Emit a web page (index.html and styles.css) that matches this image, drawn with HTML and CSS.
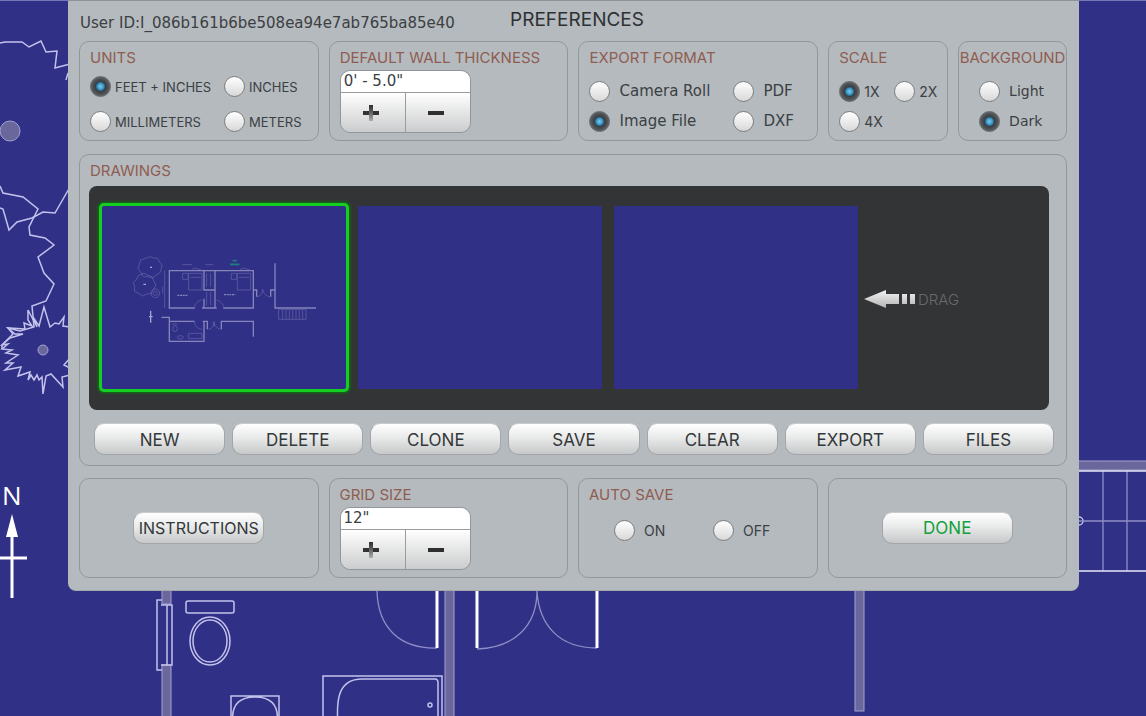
FILE: index.html
```html
<!DOCTYPE html>
<html lang="en">
<head>
    <meta charset="UTF-8">
    <meta name="viewport" content="width=device-width, initial-scale=1.0">
    <title>Preferences</title>
    <link rel="stylesheet" href="styles.css">
</head>
<body>
    <!-- Floor plan behind the panel -->
    <svg class="plan" aria-hidden="true">
        <path class="plan-thin" d="M0 0H2200"/>
        <g class="plan-tree">
            <path d="M0 43L5 42H22L29 47L41 41L46 52L57 51L55 68L70 64M68 73L66 80"/>
            <path d="M0 186L3 193L23 197L38 209L29 227L30 235L45 238L54 245L38 257L44 273L54 284L46 301L32 306L34 327L20 331L8 328L13 334L2 345V349"/>
            <path d="M0 208L3 209L9 230L17 222L32 218L43 212L55 213L70 187"/>
            <path d="M70 327L63 326L64 317L59 324L55 323L50 327L44 307L39 326L33 317L37 327L28 310V320L32 326L24 323L25 329L8 328L15 334L23 334L10 338L2 345L8 344L2 349L12 350L6 353L18 355L6 363L13 363L5 370L21 367L18 376L30 372L28 380L31 375L34 380L37 375L39 380L42 377L43 394L46 376L51 374L63 387L62 377L70 375M70 358L64 365L70 368"/>
        </g>
        <circle class="plan-solid" cx="10" cy="131" r="10"/>
        <circle class="plan-solid" cx="43" cy="350" r="5"/>

        <text class="plan-north" x="2" y="505">N</text>
        <path class="plan-white" d="M12 534V598M0 558H27"/>
        <path class="plan-head" d="M12 514L18 537H6Z"/>

        <g class="plan-solid">
            <rect x="162" y="580" width="9" height="24"/>
            <rect x="162" y="665" width="9" height="60"/>
            <rect x="445" y="580" width="9" height="145"/>
            <rect x="855" y="580" width="9" height="131"/>
            <rect x="1070" y="461" width="1200" height="9"/>
        </g>
        <g class="plan-line">
            <path d="M162 600H157V670H162M161 605H172V665H161M167 605V665"/>
            <rect x="186" y="601" width="48" height="12" rx="2"/>
            <ellipse cx="210" cy="641" rx="20" ry="24"/>
            <ellipse cx="210" cy="641" rx="17" ry="21"/>
            <path d="M231 725V696H279V725M233 725C230 702 242 697 255 697S280 702 277 725"/>
            <path d="M323 725V676H442V725M338 725C336 700 338 679 362 679H435Q438 679 438 683V725"/>
            <circle cx="430" cy="705" r="2"/>
            <circle cx="1079" cy="521" r="4"/>
        </g>
        <path class="plan-thin" d="M377 591C378 628 400 649 437 648M477 649C514 648 537 626 537 591C539 626 560 648 597 648M1103 471V571M1127 471V571M1079 521H2200"/>
        <path class="plan-white" d="M437 580V648M477 580V648M597 580V648"/>
        <path class="plan-edge" d="M1070 471H2200M1070 571H2200"/>
    </svg>

    <main class="panel">
        <header class="panel-header">
            <div class="user-id">User ID:I_086b161b6be508ea94e7ab765ba85e40</div>
            <h1>PREFERENCES</h1>
        </header>

        <div class="row row-top">
            <section class="box">
                <h2>UNITS</h2>
                <div class="options options-units">
                    <label><input type="radio" name="units" checked>FEET + INCHES</label>
                    <label><input type="radio" name="units">INCHES</label>
                    <label><input type="radio" name="units">MILLIMETERS</label>
                    <label><input type="radio" name="units">METERS</label>
                </div>
            </section>

            <section class="box">
                <h2><label for="wall">DEFAULT WALL THICKNESS</label></h2>
                <div class="stepper">
                    <input type="text" id="wall" value="0' - 5.0&quot;">
                    <button type="button" aria-label="Increase wall thickness">
                        <svg width="16" height="16">
                            <defs>
                                <linearGradient id="fade" x1="0" y1="0" x2="0" y2="1">
                                    <stop offset="0" stop-color="#2c2c2c"/>
                                    <stop offset="0.5" stop-color="#666"/>
                                    <stop offset="1" stop-color="#b0b0b0"/>
                                </linearGradient>
                            </defs>
                            <path fill="#333" d="M0 6H16V10H0Z"/>
                            <path fill="url(#fade)" d="M6 0H10V16H6Z"/>
                        </svg>
                    </button>
                    <button type="button" aria-label="Decrease wall thickness">
                        <svg width="16" height="16"><path fill="#2f2f2f" d="M0 6H16V10H0Z"/></svg>
                    </button>
                </div>
            </section>

            <section class="box">
                <h2>EXPORT FORMAT</h2>
                <div class="options options-export">
                    <label><input type="radio" name="format">Camera Roll</label>
                    <label><input type="radio" name="format">PDF</label>
                    <label><input type="radio" name="format" checked>Image File</label>
                    <label><input type="radio" name="format">DXF</label>
                </div>
            </section>

            <section class="box">
                <h2>SCALE</h2>
                <div class="options options-scale">
                    <label><input type="radio" name="scale" checked>1X</label>
                    <label><input type="radio" name="scale">2X</label>
                    <label><input type="radio" name="scale">4X</label>
                </div>
            </section>

            <section class="box box-background">
                <h2>BACKGROUND</h2>
                <div class="options options-background">
                    <label><input type="radio" name="background">Light</label>
                    <label><input type="radio" name="background" checked>Dark</label>
                </div>
            </section>
        </div>

        <section class="box drawings">
            <h2>DRAWINGS</h2>
            <div class="strip">
                <div class="thumb selected">
                    <svg viewBox="36 48 732 549" role="img" aria-label="Floor plan">
                        <g class="mini-walls">
                            <path d="M314 354H238V242H490V354H400M342 242V302M342 326V354M375 242V354M336 354H380M342 300H375"/>
                            <path d="M214 382H238V454H342V396M238 394H314M338 394H352V418M394 418V394H490V440"/>
                            <path d="M490 300H500V320M542 320V300H554M555 220V354H678"/>
                        </g>
                        <g class="mini-lines">
                            <path d="M180 200l12 4 10 0 6 12 8 8-2 12-4 12-12 8-10 8-14-4-14 0-8-14-8-10 4-14 4-12 12-4z"/>
                            <path d="M162 250l12 6 12 4 6 14 6 12-8 12-6 12-14 2-12 6-12-8-12-6 0-14-4-12 10-10 6-12z"/>
                            <circle cx="196" cy="310" r="13"/>
                            <circle cx="196" cy="310" r="6"/>
                            <path d="M224 242V354M218 290V310M296 250H336V300H296ZM278 250H294V268H278ZM300 262H332M442 250H482V300H442ZM424 250H440V268H424ZM446 262H478"/>
                            <path d="M304 240L312 234L334 240M450 240L460 234L480 240M350 250V290M362 250V290M350 306V346M362 306V346"/>
                            <path d="M314 354C314 340 324 332 336 330M402 354C400 340 390 332 380 330M314 396C314 408 322 416 336 418M372 394V410M356 418C366 416 372 408 372 396C374 408 382 416 392 418M500 320C510 320 518 312 518 298C520 312 530 320 542 320"/>
                            <path d="M566 358H648V388H566ZM578 358V388M588 358V388M598 358V388M608 358V388M618 358V388M628 358V388M638 358V388"/>
                            <path d="M246 402H262M296 430H336V446H296ZM276 224H306M346 224H370"/>
                            <ellipse cx="255" cy="416" rx="7" ry="9"/>
                            <ellipse cx="271" cy="442" rx="9" ry="5"/>
                        </g>
                        <path class="mini-marks" d="M182 362V398M177 380H188M180 232H186M160 283H168"/>
                        <path class="mini-walls" stroke-dasharray="6 2" d="M262 316H294M402 314H436"/>
                        <path class="mini-green" d="M420 223H448M428 212H440"/>
                    </svg>
                </div>
                <div class="thumb"></div>
                <div class="thumb"></div>
                <div class="drag">
                    <svg width="52" height="18" aria-hidden="true">
                        <defs>
                            <linearGradient id="metal" x1="0" y1="0" x2="0" y2="1">
                                <stop offset="0" stop-color="#f4f4f4"/>
                                <stop offset="1" stop-color="#b4b4b4"/>
                            </linearGradient>
                        </defs>
                        <path fill="url(#metal)" d="M0 9L22 0V4H35V14H22V18ZM38 4H43V14H38ZM46 4H51V14H46Z"/>
                    </svg>
                    <span>DRAG</span>
                </div>
            </div>
            <div class="actions">
                <button type="button" class="btn">NEW</button>
                <button type="button" class="btn">DELETE</button>
                <button type="button" class="btn">CLONE</button>
                <button type="button" class="btn">SAVE</button>
                <button type="button" class="btn">CLEAR</button>
                <button type="button" class="btn">EXPORT</button>
                <button type="button" class="btn">FILES</button>
            </div>
        </section>

        <div class="row row-bottom">
            <section class="box box-center">
                <button type="button" class="btn btn-small">INSTRUCTIONS</button>
            </section>

            <section class="box">
                <h2><label for="grid">GRID SIZE</label></h2>
                <div class="stepper">
                    <input type="text" id="grid" value="12&quot;">
                    <button type="button" aria-label="Increase grid size">
                        <svg width="16" height="16">
                            <path fill="#333" d="M0 6H16V10H0Z"/>
                            <path fill="url(#fade)" d="M6 0H10V16H6Z"/>
                        </svg>
                    </button>
                    <button type="button" aria-label="Decrease grid size">
                        <svg width="16" height="16"><path fill="#2f2f2f" d="M0 6H16V10H0Z"/></svg>
                    </button>
                </div>
            </section>

            <section class="box">
                <h2>AUTO SAVE</h2>
                <div class="options options-save">
                    <label><input type="radio" name="autosave">ON</label>
                    <label><input type="radio" name="autosave">OFF</label>
                </div>
            </section>

            <section class="box box-center">
                <button type="button" class="btn btn-done">DONE</button>
            </section>
        </div>
    </main>
</body>
</html>
```

FILE: styles.css
```css
* {
    margin: 0;
    padding: 0;
    box-sizing: border-box;
    font-family: Inter, "Liberation Sans", sans-serif;
}

body {
    min-height: 100vh;
    background-color: #313087;
    color: #3b4043;
    overflow: hidden;
}

/* Floor plan */
.plan {
    position: absolute;
    top: 0;
    left: 0;
    width: 100%;
    height: 100%;
    fill: none;
}

.plan-tree,
.plan-line {
    stroke: #c3c2ec;
    stroke-width: 1.5;
}

.plan-solid {
    fill: #69679c;
    stroke: #a3a2cf;
}

.plan-thin {
    stroke: #8f8ec6;
    stroke-width: 1.3;
}

.plan-white {
    stroke: #fff;
    stroke-width: 3;
}

.plan-edge {
    stroke: #e6e6fa;
    stroke-width: 1.5;
}

.plan-head,
.plan-north {
    fill: #fff;
}

.plan-north {
    font-family: "Open Sans", sans-serif;
    font-size: 26px;
}

/* Panel */
.panel {
    position: relative;
    margin: 0 67px 0 68px;
    padding: 0 12px 12px 11px;
    background-color: #b5babe;
    border-top: 1px solid #8d9297;
    border-bottom: 1px solid #a3a8ac;
    border-radius: 0 0 8px 8px;
}

.panel-header {
    display: grid;
    grid-template-columns: 1fr auto 1fr;
    align-items: center;
    height: 40px;
}

.user-id {
    min-width: 0;
    font-family: "DejaVu Sans", sans-serif;
    font-size: 15px;
    white-space: nowrap;
    padding: 4px 0 0 1px;
}

h1 {
    padding: 0 0 3px 8px;
    font-size: 19px;
    line-height: 22px;
    font-weight: 400;
    color: #2d3133;
}

.row {
    display: grid;
    gap: 10px;
}

.row-top {
    grid-template-columns: 240fr 240fr 240fr 120fr 109fr;
}

.row-bottom {
    grid-template-columns: repeat(4, 1fr);
}

.box {
    min-width: 0;
    min-height: 100px;
    padding: 7px 10px 0;
    border: 1px solid #92979b;
    border-radius: 10px;
}

h2 {
    font-size: 15px;
    line-height: 18px;
    font-weight: 400;
    color: #8f5d51;
    white-space: nowrap;
}

.box-center {
    display: flex;
    align-items: center;
    justify-content: center;
    padding: 0;
}

.box-background {
    padding: 7px 0 0;
    text-align: center;
}

/* Radio buttons */
.options {
    display: grid;
    grid-auto-rows: 30px;
    margin-top: 9px;
    font-size: 14px;
}

.options label {
    display: flex;
    align-items: center;
    gap: 9px;
    white-space: nowrap;
}

.options-units {
    grid-template-columns: 134px 1fr;
    grid-auto-rows: 35px;
    margin-top: 2px;
    font-size: 13px;
}

.options-export {
    grid-template-columns: 144px 1fr;
}

.options-export label,
.options-background label {
    font-family: "DejaVu Sans", sans-serif;
}

.options-export label {
    font-size: 15px;
}

.options-scale {
    grid-template-columns: 55px 1fr;
}

.options-units label,
.options-scale label {
    gap: 4px;
}

.options-background {
    padding-left: 20px;
}

.options-save {
    grid-template-columns: 99px 1fr;
    margin-top: 11px;
    padding-left: 25px;
}

input[type="radio"] {
    appearance: none;
    flex: none;
    width: 21px;
    height: 21px;
    border: 1px solid #7b7e80;
    border-radius: 50%;
    background: linear-gradient(#fff, #d8d8d8);
}

input[type="radio"]:checked {
    border-color: #63676a;
    background: radial-gradient(circle, #7cc8ea 0, #3f9ac8 3px, #2a6f96 4px, #3a3f43 5px, #505457 8px, #696d70 10px);
}

/* Value with plus and minus */
.stepper {
    display: grid;
    grid-template-columns: 1fr 1fr;
    grid-template-rows: 21px 40px;
    width: 131px;
    margin-top: 3px;
    border: 1px solid #92969a;
    border-radius: 10px;
    overflow: hidden;
}

.stepper input {
    grid-column: 1 / 3;
    min-width: 0;
    padding: 0 3px 2px;
    border: none;
    background-color: #fff;
    color: #3b4043;
    font-family: "DejaVu Sans", sans-serif;
    font-size: 15px;
}

.stepper button {
    display: flex;
    align-items: center;
    justify-content: center;
    padding-right: 4px;
    border: none;
    border-top: 1px solid #989ca0;
    background: linear-gradient(#fff, #cbcccd);
}

.stepper button + button {
    border-left: 1px solid #989ca0;
}

/* Drawings */
.drawings {
    margin: 13px 0 12px;
    padding: 7px 12px 10px 9px;
}

.drawings h2 {
    padding-left: 1px;
}

.strip {
    display: flex;
    gap: 12px;
    margin: 6px 5px 13px 0;
    padding: 20px 13px 21px;
    background-color: #333435;
    border-radius: 8px;
}

.thumb {
    flex: none;
    width: 244px;
    height: 183px;
    background-color: #313087;
}

.thumb.selected {
    border-radius: 2px;
    box-shadow: 0 0 0 3px #14cf22, 0 0 3px 4px #087a10;
}

.thumb svg {
    display: block;
    width: 100%;
    height: 100%;
    fill: none;
}

.mini-walls {
    stroke: #8584bb;
    stroke-width: 4;
}

.mini-lines {
    stroke: #6766a8;
    stroke-width: 2;
}

.mini-marks {
    stroke: #a5a4d0;
    stroke-width: 4;
}

.mini-green {
    stroke: #1c7f80;
    stroke-width: 5;
}

.drag {
    display: flex;
    align-items: center;
    gap: 2px;
    margin-left: -6px;
    padding-top: 3px;
    font-size: 15px;
    font-weight: 300;
    color: #686a6c;
}

/* Buttons */
.actions {
    display: grid;
    grid-template-columns: repeat(7, 1fr);
    gap: 7px;
    margin-left: 5px;
}

.btn {
    height: 32px;
    border: 1px solid #a2a6a9;
    border-top-color: #c9cccf;
    border-radius: 10px;
    background: linear-gradient(#fff, #e9eaea 45%, #c6c8c9);
    color: #34383a;
    font-size: 17px;
}

.actions .btn {
    padding-top: 2px;
}

.btn-small,
.btn-done {
    width: 131px;
}

.btn-small {
    font-size: 16px;
}

.btn-done {
    color: #12a03c;
}
```
